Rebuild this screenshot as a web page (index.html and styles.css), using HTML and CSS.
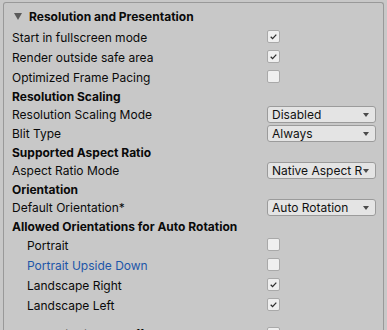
FILE: index.html
```html
<!DOCTYPE html>
<html lang="en">
<head>
    <meta charset="UTF-8">
    <title>Player Settings</title>
    <link rel="stylesheet" href="styles.css">
</head>
<body>
    <div class="panel">
        <div class="foldout"><span class="fold-arrow"></span>Resolution and Presentation</div>

        <div class="row check">
            <span class="label">Start in fullscreen mode</span>
            <span class="box on"><svg viewBox="0 0 13 13"><path d="M3.2 6.8 L5.4 9 L9.8 4.3"/></svg></span>
        </div>
        <div class="row check">
            <span class="label">Render outside safe area</span>
            <span class="box on"><svg viewBox="0 0 13 13"><path d="M3.2 6.8 L5.4 9 L9.8 4.3"/></svg></span>
        </div>
        <div class="row check">
            <span class="label">Optimized Frame Pacing</span>
            <span class="box"></span>
        </div>

        <div class="row head"><span class="label">Resolution Scaling</span></div>
        <div class="row drop">
            <span class="label">Resolution Scaling Mode</span>
            <span class="popup"><span class="popup-text">Disabled</span></span>
        </div>
        <div class="row drop">
            <span class="label">Blit Type</span>
            <span class="popup"><span class="popup-text">Always</span></span>
        </div>

        <div class="row head"><span class="label">Supported Aspect Ratio</span></div>
        <div class="row drop">
            <span class="label">Aspect Ratio Mode</span>
            <span class="popup"><span class="popup-text">Native Aspect R</span></span>
        </div>

        <div class="row head"><span class="label">Orientation</span></div>
        <div class="row drop">
            <span class="label">Default Orientation*</span>
            <span class="popup"><span class="popup-text">Auto Rotation</span></span>
        </div>

        <div class="row head"><span class="label">Allowed Orientations for Auto Rotation</span></div>
        <div class="row check sub">
            <span class="label">Portrait</span>
            <span class="box"></span>
        </div>
        <div class="row check sub">
            <span class="label hover">Portrait Upside Down</span>
            <span class="box"></span>
        </div>
        <div class="row check sub">
            <span class="label">Landscape Right</span>
            <span class="box on"><svg viewBox="0 0 13 13"><path d="M3.2 6.8 L5.4 9 L9.8 4.3"/></svg></span>
        </div>
        <div class="row check sub">
            <span class="label">Landscape Left</span>
            <span class="box on"><svg viewBox="0 0 13 13"><path d="M3.2 6.8 L5.4 9 L9.8 4.3"/></svg></span>
        </div>

        <div class="row check spaced">
            <span class="label">Use 32-bit Display Buffer*</span>
            <span class="box"></span>
        </div>
    </div>
</body>
</html>
```

FILE: styles.css
```css
body {
    margin: 0;
    background-color: #c8c8c8;
    font-family: Inter, "Noto Sans", sans-serif;
    font-size: 12px;
    color: #0a0a0a;
    overflow: hidden;
    height: 330px;
}

.panel {
    margin: 2px 3px 0 3px;
    border: 1px solid #999;
    border-bottom: none;
    border-radius: 3px 3px 0 0;
    padding: 3px 7px 0 8px;
}

.foldout {
    height: 20px;
    margin-bottom: 1px;
    display: flex;
    align-items: center;
    font-weight: bold;
}

.fold-arrow {
    width: 0;
    height: 0;
    margin: 0 7px 0 2px;
    border-left: 4px solid transparent;
    border-right: 4px solid transparent;
    border-top: 7px solid #5a5a5a;
}

.row {
    display: flex;
    align-items: center;
}

.row .label {
    width: 255px;
    flex-shrink: 0;
    white-space: nowrap;
}

.check {
    height: 20px;
}

.head {
    height: 18px;
}

.head .label {
    font-weight: bold;
}

.drop {
    height: 19px;
}

.sub .label {
    padding-left: 15px;
    box-sizing: border-box;
}

.label.hover {
    color: #1d56a8;
}

.spaced {
    margin-top: 9px;
}

.box {
    width: 13px;
    height: 13px;
    box-sizing: border-box;
    border: 1px solid #a9a9a9;
    border-radius: 2px;
    background-color: #efefef;
    margin-top: -1px;
}

.box svg {
    display: block;
    width: 11px;
    height: 11px;
}

.box svg path {
    fill: none;
    stroke: #2e2e2e;
    stroke-width: 1.5;
}

.popup {
    position: relative;
    display: flex;
    width: 109px;
    height: 17px;
    box-sizing: border-box;
    border: 1px solid #9b9b9b;
    border-radius: 3px;
    background-color: #e4e4e4;
    padding: 0 12px 0 4px;
    line-height: 15px;
    color: #111;
}

.popup-text {
    white-space: nowrap;
    overflow: hidden;
}

.popup::after {
    content: "";
    position: absolute;
    right: 6px;
    top: 6px;
    border-left: 3px solid transparent;
    border-right: 3px solid transparent;
    border-top: 4px solid #4a4a4a;
}
```
